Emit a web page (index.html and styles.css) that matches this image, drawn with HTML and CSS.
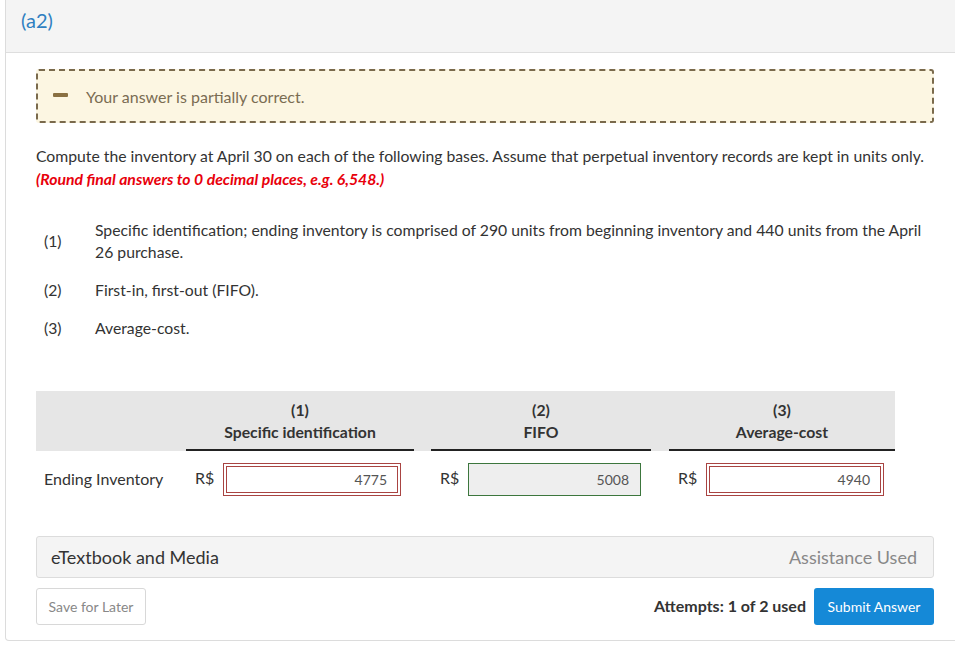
FILE: index.html
```html
<!DOCTYPE html>
<html lang="en">
<head>
<meta charset="utf-8">
<title>(a2)</title>
<link rel="stylesheet" href="styles.css">
</head>
<body>
<div class="card">
  <div class="card-head"><span class="part">(a2)</span></div>
  <div class="card-body">
    <div class="alert">
      <span class="alert-icon"></span>
      <span class="alert-text">Your answer is partially correct.</span>
    </div>

    <p class="question">Compute the inventory at April 30 on each of the following bases. Assume that perpetual inventory records are kept in units only.<br><em class="hint">(Round final answers to 0 decimal places, e.g. 6,548.)</em></p>

    <div class="items">
      <span class="num">(1)</span>
      <span class="desc">Specific identification; ending inventory is comprised of 290 units from beginning inventory and 440 units from the April 26 purchase.</span>
      <span class="num">(2)</span>
      <span class="desc">First-in, first-out (FIFO).</span>
      <span class="num">(3)</span>
      <span class="desc">Average-cost.</span>
    </div>

    <div class="grid">
      <div class="gh gh-blank"></div>
      <div class="gh"><span>(1)</span><span>Specific identification</span></div>
      <div class="gh g2"><span>(2)</span><span>FIFO</span></div>
      <div class="gh g3"><span>(3)</span><span>Average-cost</span></div>

      <div class="row-label">Ending Inventory</div>
      <div class="cell"><span class="cur">R$</span><span class="inp wrong">4775</span></div>
      <div class="cell g2"><span class="cur">R$</span><span class="inp right">5008</span></div>
      <div class="cell g3"><span class="cur">R$</span><span class="inp wrong">4940</span></div>
    </div>

    <div class="media">
      <span class="media-title">eTextbook and Media</span>
      <span class="media-used">Assistance Used</span>
    </div>

    <div class="actions">
      <button class="btn-save">Save for Later</button>
      <div class="submit-wrap">
        <span class="attempts">Attempts: 1 of 2 used</span>
        <button class="btn-submit">Submit Answer</button>
      </div>
    </div>
  </div>
</div>
</body>
</html>
```

FILE: styles.css
```css
html, body {
  margin: 0;
  padding: 0;
  background: #fff;
  overflow: hidden;
}
body {
  font-family: Lato, "Open Sans", sans-serif;
  color: #333;
  font-size: 16px;
}
.card {
  margin-left: 5px;
  width: 960px;
  border: 1px solid #dcdcdc;
  border-top: none;
  border-radius: 0 0 4px 4px;
}
.card-head {
  height: 53px;
  background: #f4f4f4;
  border-bottom: 1px solid #dedede;
  display: flex;
  align-items: center;
  padding-left: 15px;
  padding-bottom: 12px;
  box-sizing: border-box;
}
.part {
  color: #2f7fc1;
  font-size: 20px;
}
.card-body {
  padding: 16px 26px 15px 30px;
  width: 898px;
}
.alert {
  height: 54px;
  box-sizing: border-box;
  border: 2px dashed #7a6a4c;
  border-radius: 3px;
  background: #fcf6e2;
  display: flex;
  align-items: center;
  padding-left: 15px;
}
.alert-icon {
  width: 15px;
  height: 4px;
  border-radius: 1px;
  background: #8a7042;
  margin-right: 18px;
  margin-top: -2px;
}
.alert-text {
  color: #7a6c52;
  font-size: 16px;
}
.question {
  margin: 21px 0 0;
  line-height: 23px;
  font-size: 15.75px;
  color: #333;
}
.hint {
  color: #e8000b;
  font-weight: 700;
  font-style: italic;
}
.items {
  margin-top: 29px;
  display: grid;
  grid-template-columns: 51px 1fr;
  row-gap: 16px;
  align-items: center;
  padding-left: 8px;
  font-size: 15.75px;
}
.num, .desc {
  line-height: 22px;
}
.grid {
  margin-top: 52px;
  display: grid;
  grid-template-columns: 150px 228px 237px 244px;
  width: 859px;
  background: linear-gradient(#e6e6e6, #e6e6e6) no-repeat 0 0 / 100% 60px;
}
.g2 {
  margin-left: 17px;
}
.g3 {
  margin-left: 18px;
}
.gh {
  height: 60px;
  box-sizing: border-box;
  border-bottom: 2px solid #222;
  display: flex;
  flex-direction: column;
  align-items: center;
  justify-content: center;
  font-weight: 700;
  font-size: 15.75px;
  line-height: 22px;
  color: #333;
  padding-top: 2px;
}
.gh-blank {
  border-bottom: none;
}
.row-label {
  display: flex;
  align-items: center;
  padding-left: 8px;
  height: 53px;
  padding-top: 2px;
  box-sizing: border-box;
}
.cell {
  display: flex;
  align-items: center;
  padding-left: 9px;
  padding-top: 3px;
  height: 53px;
  box-sizing: border-box;
}
.cur {
  width: 28px;
  margin-top: -3px;
}
.inp {
  flex: 0 0 auto;
  height: 33px;
  box-sizing: border-box;
  display: flex;
  align-items: center;
  justify-content: flex-end;
  padding-right: 10px;
  font-size: 14px;
  color: #555;
}
.wrong {
  width: 178px;
  border: 4px double #a94442;
  background: #fff;
}
.right {
  width: 173px;
  border: 1px solid #3c763d;
  background: #eeeeee;
  padding-right: 11px;
}
.media {
  margin-top: 32px;
  height: 42px;
  box-sizing: border-box;
  border: 1px solid #dcdcdc;
  border-radius: 3px;
  background: #f4f4f4;
  display: flex;
  align-items: center;
  justify-content: space-between;
  padding: 0 16px 0 14px;
  font-size: 18px;
}
.media-title {
  color: #333;
}
.media-used {
  color: #888;
}
.actions {
  margin-top: 10px;
  display: flex;
  justify-content: space-between;
  align-items: center;
}
.btn-save {
  width: 110px;
  height: 37px;
  border: 1px solid #d8d8d8;
  border-radius: 3px;
  background: #fff;
  color: #888;
  font-family: Lato, sans-serif;
  font-size: 14px;
  padding: 0;
}
.submit-wrap {
  display: flex;
  align-items: center;
}
.attempts {
  font-weight: 700;
  font-size: 16px;
  color: #333;
  margin-right: 8px;
  margin-top: -3px;
}
.btn-submit {
  width: 120px;
  height: 37px;
  border: none;
  border-radius: 3px;
  background: #1589d7;
  color: #fff;
  font-family: Lato, sans-serif;
  font-size: 14px;
  padding: 0;
}
```
